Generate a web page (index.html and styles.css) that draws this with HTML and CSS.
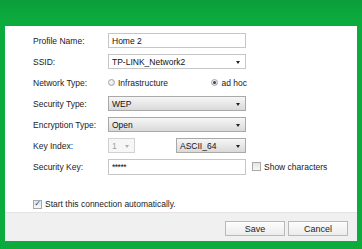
FILE: index.html
```html
<!DOCTYPE html>
<html lang="en">
  <head>
    <meta charset="UTF-8" />
    <meta name="viewport" content="width=device-width, initial-scale=1.0" />
    <title>Profile</title>
    <link rel="stylesheet" href="styles.css">
  </head>
  <body>
    <main class="window">
      <section class="panel">
        <div class="form">
          <span class="label">Profile Name:</span>
          <div class="box">Home 2</div>
          <span></span>

          <span class="label">SSID:</span>
          <div class="box select">TP-LINK_Network2</div>
          <span></span>

          <span class="label">Network Type:</span>
          <div class="pair">
            <span class="option"><i class="radio"></i>Infrastructure</span>
            <span class="option"><i class="radio on"></i>ad hoc</span>
          </div>
          <span></span>

          <span class="label">Security Type:</span>
          <div class="box select is-drop">WEP</div>
          <span></span>

          <span class="label">Encryption Type:</span>
          <div class="box select is-drop">Open</div>
          <span></span>

          <span class="label">Key Index:</span>
          <div class="pair">
            <div class="box select is-off small">1</div>
            <div class="box select is-drop wide">ASCII_64</div>
          </div>
          <span></span>

          <span class="label">Security Key:</span>
          <div class="box tall">*****</div>
          <span class="option extra"><i class="check"></i>Show characters</span>
        </div>

        <div class="auto">
          <span class="option"><i class="check on"></i>Start this connection automatically.</span>
        </div>

        <footer>
          <button>Save</button>
          <button>Cancel</button>
        </footer>
      </section>
    </main>
  </body>
</html>
```

FILE: styles.css
```css
*,
*::before,
*::after {
  box-sizing: border-box;
  margin: 0;
  padding: 0;
}

body {
  font-family: 'Liberation Sans', Arial, sans-serif;
  font-size: 8.5px;
  color: #222;
  background: #fff;
}

.window {
  width: 362px;
  height: 249px;
  padding: 26px 5px 8px 5px;
  background: linear-gradient(#0b9e39, #0cab3e 20px);
  display: flex;
}

.panel {
  flex: 1;
  background: #fff;
  display: flex;
  flex-direction: column;
  padding-top: 4px;
}

.form {
  display: grid;
  grid-template-columns: 75px 138px auto;
  grid-auto-rows: 21px;
  align-items: center;
  padding-left: 28px;
}

.box {
  height: 15px;
  border: 1px solid #c6c6c6;
  padding: 0 3px;
  display: flex;
  align-items: center;
  color: #111;
  background: #fff;
  position: relative;

  &.tall {
    height: 16px;
    letter-spacing: -0.5px;
    align-items: flex-start;
    padding-top: 2px;
  }

  &.select::after {
    content: '';
    position: absolute;
    right: 5px;
    top: 6px;
    border: 2.5px solid transparent;
    border-top: 3px solid #222;
    border-bottom: 0;
  }

  &.is-drop {
    border-color: #a9a9a9;
    background: linear-gradient(#f6f6f6, #e8e8e8 50%, #d9d9d9);
  }

  &.is-off {
    color: #a0a0a0;
    border-color: #d2d2d2;
    background: #f6f6f6;

    &::after {
      border-top-color: #b0b0b0;
    }
  }

  &.small {
    width: 27px;
  }

  &.wide {
    width: 70px;
  }
}

.pair {
  display: flex;
  justify-content: space-between;
  align-items: center;
}

.form .pair .option:last-child {
  margin-right: -1px;
}

.option {
  display: flex;
  align-items: center;
  gap: 3px;
  white-space: nowrap;
}

.radio {
  width: 7px;
  height: 7px;
  border-radius: 50%;
  border: 1px solid #a4a4a4;
  background: radial-gradient(circle at 40% 40%, #fdfdfd, #d6d6d6);
  display: grid;
  place-content: center;

  &.on::after {
    content: '';
    width: 3px;
    height: 3px;
    border-radius: 50%;
    background: #27466f;
  }
}

.check {
  width: 9px;
  height: 9px;
  border: 1px solid #a8a8a8;
  background: linear-gradient(#e4e4e4, #f8f8f8);
  display: grid;
  place-content: center;
  font-style: normal;

  &.on::after {
    content: '\2713';
    font-size: 8px;
    line-height: 1;
    color: #2b3f63;
    font-family: 'DejaVu Sans', sans-serif;
  }
}

.extra {
  margin-left: 6px;
}

.auto {
  height: 12px;
  margin-top: 21px;
  padding-left: 28px;
  display: flex;
  align-items: center;
}

footer {
  margin-top: auto;
  height: 29px;
  border-top: 1px solid #e4e4e4;
  background: #f0f0f0;
  display: flex;
  justify-content: flex-end;
  align-items: flex-start;
  gap: 3px;
  padding: 8px 9px 0 0;

  & button {
    font: inherit;
    font-size: 9px;
    color: #222;
    width: 60px;
    height: 15px;
    border: 1px solid #b9b9b9;
    background: linear-gradient(#fdfdfd, #ececec);
  }
}
```
